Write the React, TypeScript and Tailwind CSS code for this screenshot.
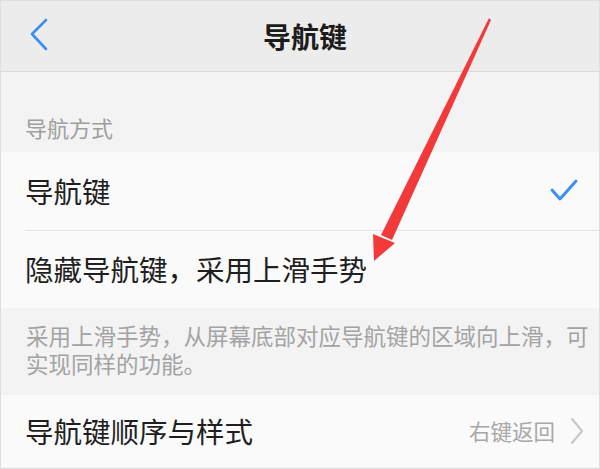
const cjk = { fontFamily: '"Noto Sans CJK SC", "Noto Sans", sans-serif' };

function BackIcon() {
    return (
        <svg width="20" height="34" viewBox="0 0 20 34" fill="none">
            <polyline points="16,2 2,16 16,31" stroke="#3a8ef0" strokeWidth="2.6" strokeLinecap="round" strokeLinejoin="round" />
        </svg>
    );
}

function CheckIcon() {
    return (
        <svg width="30" height="26" viewBox="0 0 30 26" fill="none">
            <polyline points="3,12 11,21 27,3" stroke="#3d8ef2" strokeWidth="3" strokeLinecap="round" strokeLinejoin="round" />
        </svg>
    );
}

function ChevronRight() {
    return (
        <svg width="16" height="28" viewBox="0 0 16 28" fill="none">
            <polyline points="3,2 13,14 3,26" stroke="#c6c6c6" strokeWidth="2" strokeLinecap="round" strokeLinejoin="round" />
        </svg>
    );
}

export default function App() {
    return (
        <div
            className="relative w-[600px] h-[469px] overflow-hidden bg-[#f3f3f3] border border-[#dedede] flex flex-col"
            style={cjk}
        >
            {/* Header */}
            <div className="relative h-[71px] shrink-0 bg-[#ececec] border-b border-[#d9d9d9] flex items-center justify-center">
                <div className="absolute left-[29px] top-[17px]">
                    <BackIcon />
                </div>
                <h1 className="pl-[10px] text-[28px] font-semibold text-[#1c1c1c] leading-none">导航键</h1>
            </div>

            {/* Section label */}
            <div className="h-[80px] shrink-0 pt-[44px] px-[24px]">
                <p className="text-[22px] leading-[22px] text-[#9e9e9e]">导航方式</p>
            </div>

            {/* Options */}
            <div className="bg-[#fafafa] shrink-0">
                <div className="h-[78px] flex items-center justify-between pl-[24px] pr-[20px]">
                    <span className="text-[28.5px] text-[#1f1f1f] leading-none">导航键</span>
                    <CheckIcon />
                </div>
                <div className="ml-[24px] h-px bg-[#e4e4e4]" />
                <div className="h-[77px] flex items-center pl-[24px]">
                    <span className="text-[28.5px] text-[#1f1f1f] leading-none">隐藏导航键，采用上滑手势</span>
                </div>
            </div>

            {/* Description */}
            <div className="h-[87px] shrink-0 pt-[13px] pl-[25px] pr-[10px]">
                <p className="text-[22.5px] leading-[28px] text-[#a3a3a3]">
                    采用上滑手势，从屏幕底部对应导航键的区域向上滑，可实现同样的功能。
                </p>
            </div>

            {/* Order & style */}
            <div className="h-[72px] shrink-0 bg-[#fafafa] flex items-center justify-between pl-[24px] pr-[14px]">
                <span className="text-[28.5px] text-[#1f1f1f] leading-none">导航键顺序与样式</span>
                <div className="flex items-center gap-[14px]">
                    <span className="text-[21.5px] text-[#a8a8a8] leading-none">右键返回</span>
                    <ChevronRight />
                </div>
            </div>

            {/* Red annotation arrow */}
            <svg className="absolute left-0 top-0 pointer-events-none" width="600" height="469" viewBox="0 0 600 469">
                <polygon points="488,17 490,19 391,239 380,234" fill="#f23a3a" />
                <polygon points="372,233 373,260 394,242" fill="#f23a3a" />
            </svg>
        </div>
    );
}
